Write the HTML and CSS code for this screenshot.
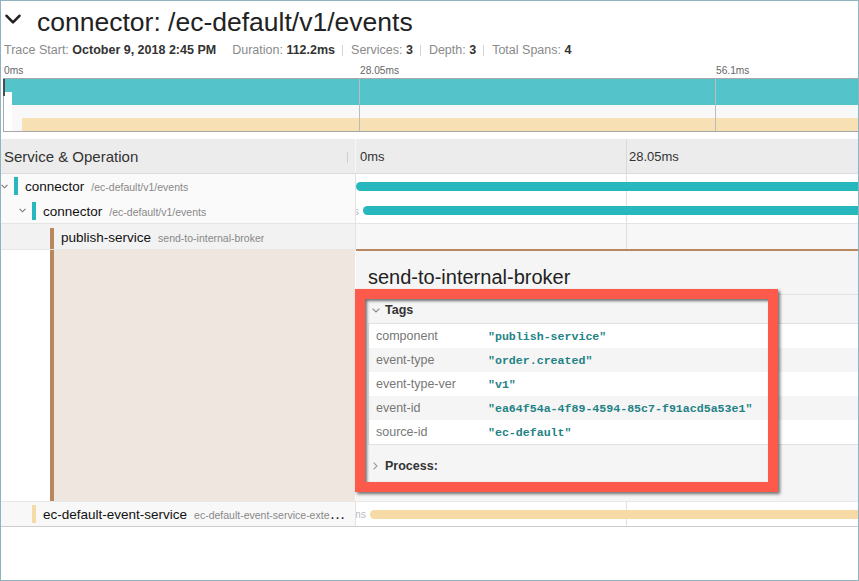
FILE: index.html
```html
<!DOCTYPE html>
<html lang="en">
<head>
<meta charset="utf-8">
<title>connector: /ec-default/v1/events</title>
<link rel="stylesheet" href="styles.css">
</head>
<body>
<div class="frame">
  <header class="trace-header">
    <h1 class="title">
      <svg class="title-chevron" width="16" height="11" viewBox="0 0 16 11"><polyline points="1.6,1.8 8,8.4 14.4,1.8" fill="none" stroke="#222" stroke-width="2.6" stroke-linecap="round" stroke-linejoin="round"/></svg>
      <span>connector: /ec-default/v1/events</span>
    </h1>
    <div class="meta">
      <span class="meta-item"><span class="meta-label">Trace Start:</span> <b>October 9, 2018 2:45 PM</b></span>
      <span class="meta-gap"></span>
      <span class="meta-item"><span class="meta-label">Duration:</span> <b>112.2ms</b></span>
      <span class="sep"></span>
      <span class="meta-item"><span class="meta-label">Services:</span> <b>3</b></span>
      <span class="sep"></span>
      <span class="meta-item"><span class="meta-label">Depth:</span> <b>3</b></span>
      <span class="sep"></span>
      <span class="meta-item"><span class="meta-label">Total Spans:</span> <b>4</b></span>
    </div>
  </header>

  <section class="minimap">
    <div class="mini-ticks">
      <span>0ms</span><span>28.05ms</span><span>56.1ms</span>
    </div>
    <div class="mini-canvas">
      <div class="mini-row"><span class="mini-bar teal"></span></div>
      <div class="mini-row r2"><span class="mini-bar teal"></span></div>
      <div class="mini-row r3"></div>
      <div class="mini-row r4"><span class="mini-bar tan"></span></div>
      <div class="mini-grid"></div>
      <div class="mini-handle"></div>
    </div>
  </section>

  <section class="timeline">
    <div class="tl-row tl-header">
      <div class="tl-name">Service &amp; Operation<span class="resizer"></span></div>
      <div class="tl-view">
        <span class="tick">0ms</span><span class="tick">28.05ms</span>
      </div>
    </div>

    <div class="tl-row span-row r1">
      <div class="tl-name">
        <span class="toggle"><svg width="7" height="5" viewBox="0 0 7 5"><polyline points="0.6,0.8 3.5,3.8 6.4,0.8" fill="none" stroke="#777" stroke-width="1.1"/></svg></span>
        <span class="svc-color teal"></span>
        <span class="label"><span class="svc">connector</span><span class="op">/ec-default/v1/events</span></span>
      </div>
      <div class="tl-view"><span class="bar-wrap b1"><span class="bar teal"></span></span></div>
    </div>

    <div class="tl-row span-row r2">
      <div class="tl-name">
        <span class="indent d1"></span>
        <span class="toggle"><svg width="7" height="5" viewBox="0 0 7 5"><polyline points="0.6,0.8 3.5,3.8 6.4,0.8" fill="none" stroke="#777" stroke-width="1.1"/></svg></span>
        <span class="svc-color teal"></span>
        <span class="label"><span class="svc">connector</span><span class="op">/ec-default/v1/events</span></span>
      </div>
      <div class="tl-view"><span class="bar-wrap b2"><span class="bar-label">111.4ms</span><span class="bar teal"></span></span></div>
    </div>

    <div class="tl-row span-row r3">
      <div class="tl-name">
        <span class="indent d2"></span>
        <span class="toggle"></span>
        <span class="svc-color brown long"></span>
        <span class="label"><span class="svc">publish-service</span><span class="op">send-to-internal-broker</span></span>
      </div>
      <div class="tl-view"></div>
    </div>

    <div class="tl-row detail-row">
      <div class="detail-left">
        <span class="detail-indent"></span>
        <span class="detail-line"></span>
        <span class="detail-fill"></span>
      </div>
      <div class="detail-right">
        <h2 class="detail-title">send-to-internal-broker</h2>
        <div class="acc">
          <div class="acc-head">
            <svg width="8" height="5" viewBox="0 0 8 5"><polyline points="0.6,0.6 4,4 7.4,0.6" fill="none" stroke="#888" stroke-width="1.1"/></svg>
            <b>Tags</b>
          </div>
          <div class="kv">
            <div class="kv-row"><span class="kv-key">component</span><span class="kv-val">"publish-service"</span></div>
            <div class="kv-row"><span class="kv-key">event-type</span><span class="kv-val">"order.created"</span></div>
            <div class="kv-row"><span class="kv-key">event-type-ver</span><span class="kv-val">"v1"</span></div>
            <div class="kv-row"><span class="kv-key">event-id</span><span class="kv-val">"ea64f54a-4f89-4594-85c7-f91acd5a53e1"</span></div>
            <div class="kv-row"><span class="kv-key">source-id</span><span class="kv-val">"ec-default"</span></div>
          </div>
        </div>
        <div class="acc-head process">
          <svg width="5" height="8" viewBox="0 0 5 8"><polyline points="0.6,0.6 4,4 0.6,7.4" fill="none" stroke="#999" stroke-width="1.1"/></svg>
          <b>Process:</b>
        </div>
      </div>
    </div>

    <div class="tl-row span-row r5">
      <div class="tl-name">
        <span class="indent d1"></span>
        <span class="toggle"></span>
        <span class="svc-color tan"></span>
        <span class="label"><span class="svc">ec-default-event-service</span><span class="op">ec-default-event-service-external-handler</span></span>
      </div>
      <div class="tl-view"><span class="bar-wrap b5"><span class="bar-label">109.7ms</span><span class="bar tan"></span></span></div>
    </div>
  </section>

  <div class="annotation"></div>
</div>
</body>
</html>
```

FILE: styles.css
```css
* { box-sizing: border-box; }
html, body { margin: 0; padding: 0; background: #fff; }
body { font-family: "Liberation Sans", Arial, Helvetica, sans-serif; color: #222; }

.frame {
  position: relative;
  width: 859px;
  height: 581px;
  border: 1px solid #8fb3bf;
  overflow: hidden;
  background: #fff;
}

/* ---------- header ---------- */
.trace-header { padding: 6px 0 0 3px; }
.title {
  display: flex;
  align-items: flex-start;
  margin: 0;
  font-size: 26.5px;
  font-weight: normal;
  line-height: 30px;
  color: #222;
  white-space: nowrap;
}
.title-chevron { flex: none; margin: 7px 16px 0 1px; }

.meta {
  display: flex;
  align-items: center;
  height: 16px;
  margin-top: 5px;
  font-size: 12.5px;
  line-height: 16px;
  white-space: nowrap;
}
.meta-label { color: #8a8a8a; }
.meta b { color: #333; }
.meta-gap { width: 16px; }
.sep { width: 1px; height: 11px; background: #d4d4d4; margin: 0 8px 0 7px; }

/* ---------- minimap ---------- */
.minimap { margin-top: 6px; }
.mini-ticks {
  display: grid;
  grid-template-columns: repeat(3, 356px);
  height: 14px;
  padding-left: 3px;
  font-size: 10.2px;
  line-height: 14px;
  color: #666;
  white-space: nowrap;
}
.mini-canvas {
  position: relative;
  width: 1600px;
  margin-left: 2px;
  border: 1px solid #a8a8a8;
  border-right: none;
  background: #fff;
}
.mini-row { display: flex; height: 13px; }
.mini-row.r2 { padding-left: 8px; }
.mini-row.r3 { margin-left: 8px; background: #f8f8f8; }
.mini-row.r4 { margin-left: 8px; padding-left: 10px; background: #f8f8f8; }
.mini-bar { flex: 1; height: 13px; }
.mini-bar.teal { background: #54c4ca; }
.mini-bar.tan { background: #f6e0b4; }
.mini-grid {
  position: absolute;
  inset: 0;
  background-image: repeating-linear-gradient(to right, transparent 0 355px, #bcbcbc 355px 356px);
}
.mini-handle {
  position: absolute;
  left: -1px;
  top: 0;
  width: 2px;
  height: 17px;
  background: #4d4d4d;
}

/* ---------- timeline ---------- */
.timeline { margin-top: 7px; }
.tl-row { display: grid; grid-template-columns: 355px 1fr; }
.tl-name {
  display: flex;
  align-items: center;
  min-width: 0;
  overflow: hidden;
  padding-right: 8px;
  border-right: 1px solid #e2e2e2;
}
.tl-view {
  position: relative;
  display: flex;
  align-items: center;
  overflow: hidden;
  background-image: linear-gradient(#e0e0e0, #e0e0e0);
  background-size: 1px 100%;
  background-repeat: no-repeat;
  background-position: 270px 0;
}

.tl-header {
  height: 35px;
  background: #ececec;
  border-bottom: 1px solid #dcdcdc;
}
.tl-header .tl-name {
  padding-left: 3px;
  padding-right: 0;
  font-size: 15px;
  color: #333;
  border-right-color: #f6f6f6;
}
.resizer { width: 1px; height: 11px; margin: 2px 7px 0 auto; background: #cfcfcf; }
.tl-header .tl-view {
  display: grid;
  grid-template-columns: 270px 270px;
  align-items: center;
  background-image: linear-gradient(#d9d9d9, #d9d9d9);
  font-size: 13px;
  color: #333;
}
.tick { padding-left: 4px; }
.tick + .tick { padding-left: 3px; }

.span-row { height: 24px; }
.span-row .tl-name { background: #fafafa; }
.span-row .tl-view { background-color: #fff; }
.span-row.r2 { height: 26px; border-bottom: 1px solid #e4e4e4; }
.span-row.r3 { height: 25px; }
.span-row.r3 .tl-name { background: #f2f2f2; }
.span-row.r3 .tl-view { background-color: #f7f7f7; }
.span-row.r5 { height: 26px; border-top: 1px solid #e8e8e8; border-bottom: 1px solid #cdcdcd; }
.span-row.r5 .tl-name { background: #f8f8f8; }

.indent { flex: none; }
.indent.d1 { width: 18px; }
.indent.d2 { width: 36px; }
.toggle { flex: none; display: flex; align-items: center; width: 13px; height: 100%; }
.svc-color { flex: none; width: 4px; height: 18px; margin-right: 7px; }
.svc-color.long { align-self: stretch; height: auto; margin-top: 4px; }
.teal { background: #27b8bd; }
.brown { background: #b8875d; }
.tan { background: #f5dba8; }

.label {
  min-width: 0;
  overflow: hidden;
  white-space: nowrap;
  text-overflow: ellipsis;
}
.svc { font-size: 13.5px; color: #111; }
.op { margin-left: 7px; font-size: 10.5px; color: #888; }

.bar-wrap { position: relative; display: flex; align-items: center; flex: none; width: 1200px; }
.bar-wrap.b2 { margin-left: 7px; }
.bar-wrap.b5 { margin-left: 14px; }
.bar { display: block; width: 100%; height: 9px; border-radius: 4.5px; }
.bar.teal { background: #27b8bd; }
.bar.tan { background: #f6dba6; }
.bar-label {
  position: absolute;
  right: 100%;
  padding-right: 4px;
  font-size: 10.5px;
  color: #bbb;
  white-space: nowrap;
}

/* ---------- detail ---------- */
.detail-row { height: 252px; }
.detail-left { display: flex; border-top: 1px solid #e6e6e6; border-right: 1px solid #fafafa; }
.detail-indent { width: 49px; background: #fff; }
.detail-line { width: 4px; background: #b8875d; }
.detail-fill { flex: 1; background: #efe7df; }

.detail-right {
  min-width: 0;
  padding: 0 0 22px 12px;
  background: #f5f5f5;
  border-top: 2px solid #b8875d;
}
.detail-title {
  margin: 0;
  padding: 14px 0 5px;
  font-size: 20px;
  font-weight: normal;
  line-height: 24px;
  color: #222;
  white-space: nowrap;
  border-bottom: 1px solid #e2e2e2;
}
.acc-head {
  display: flex;
  align-items: center;
  gap: 5px;
  height: 28px;
  padding: 2px 0 0 4px;
  font-size: 12.5px;
  color: #333;
}
.acc-head.process { margin-top: 6px; gap: 7px; padding-left: 5px; }

.kv {
  width: 1000px;
  background: #fff;
  border: 1px solid #e0e0e0;
  border-right: none;
}
.kv-row { display: flex; align-items: center; height: 24px; }
.kv-row:nth-child(even) { background: #f5f5f5; }
.kv-key { flex: none; width: 119px; padding-left: 7px; font-size: 12.5px; color: #777; }
.kv-val {
  font-family: "Liberation Mono", "Courier New", monospace;
  font-size: 11.6px;
  font-weight: bold;
  color: #1e8286;
  white-space: nowrap;
}

/* ---------- annotation overlay ---------- */
.annotation {
  position: absolute;
  left: 354px;
  top: 288px;
  width: 423px;
  height: 203px;
  border: 10px solid #fd5a4b;
  box-shadow: 2px 2px 3px rgba(0, 0, 0, 0.55), inset 2px 2px 3px rgba(0, 0, 0, 0.55);
}
```
